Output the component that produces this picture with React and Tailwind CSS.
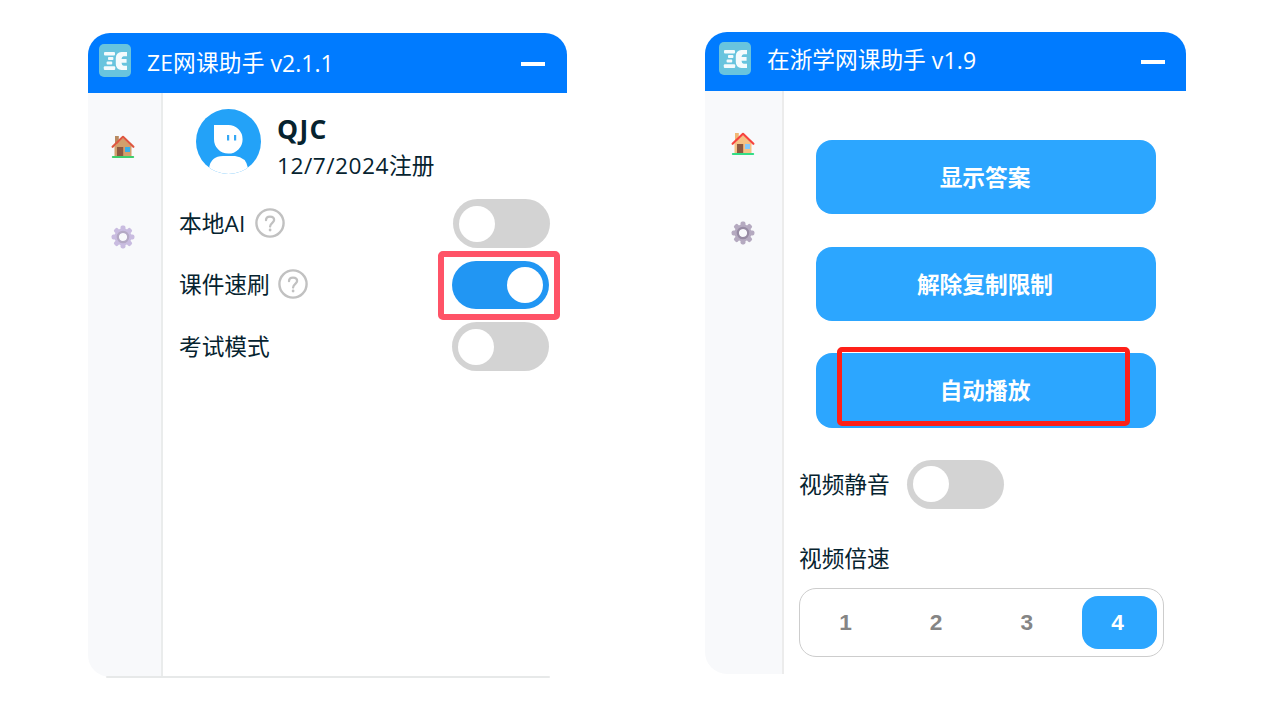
import React from "react";

const latin = "font-['Open_Sans','Noto_Sans_CJK_SC',sans-serif]";

function Logo() {
  return (
    <svg className="h-[33px] w-8 shrink-0" viewBox="0 0 32 33">
      <rect width="32" height="33" rx="5" fill="#68c4de" />
      <g fill="#f4fbfd">
        <rect x="5" y="8" width="11" height="3.6" rx="1" />
        <rect x="9" y="13" width="5.4" height="3" rx="0.8" />
        <rect x="7.6" y="17.6" width="5.6" height="3" rx="0.8" />
        <rect x="4.8" y="22.2" width="11.4" height="3.8" rx="1" />
        <path d="M22.5 8H28V12.2H24.6Q22.8 12.4 22.5 15H27.6V18.8H22.5Q22.7 21.6 24.7 21.8H28V26H22.5Q16.8 25.5 16.8 20V14Q17 8.5 22.5 8Z" />
      </g>
    </svg>
  );
}

function House({ muted }) {
  return (
    <svg className="h-6 w-6" viewBox="0 0 24 24">
      <rect x="4" y="1" width="3.8" height="8" fill={muted ? "#b88b61" : "#f1b875"} />
      <path d="M3.5 11 12 3 20.5 11V22H3.5Z" fill={muted ? "#d2a06c" : "#f5c184"} />
      <path d="M1.6 11.8 12 1.8 22.4 11.8" fill="none" stroke={muted ? "#df573f" : "#f7443e"} strokeWidth="2.2" strokeLinecap="round" strokeLinejoin="round" />
      <rect x="6" y="12" width="6.2" height="9" fill="#8d5840" />
      <rect x="14" y="12" width="5" height="5" fill={muted ? "#38aee8" : "#84c9fb"} />
      <rect x="0.8" y="21" width="22.4" height="2" rx="1" fill={muted ? "#3ece6c" : "#32dd86"} />
    </svg>
  );
}

const teeth = [0, 45, 90, 135, 180, 225, 270, 315];

function Gear({ muted }) {
  const outer = muted ? "#c9bce0" : "#b5aac0";
  return (
    <svg className="h-6 w-6" viewBox="0 0 24 24">
      {teeth.map((a) => (
        <rect key={a} x="9.5" y="0.6" width="5" height="6" rx="1.8" fill={outer} transform={`rotate(${a} 12 12)`} />
      ))}
      <circle cx="12" cy="12" r="6.3" fill="none" stroke={outer} strokeWidth="4.4" />
      <circle cx="12" cy="12" r="5.2" fill="none" stroke={muted ? "#b4a9c4" : "#978ba3"} strokeWidth="2.2" />
    </svg>
  );
}

function Help() {
  return (
    <svg className="h-[30px] w-[30px] shrink-0" viewBox="0 0 30 30" fill="none" stroke="#c1c1c1">
      <circle cx="15" cy="15" r="13.6" strokeWidth="2.4" />
      <path d="M11 12.2C11 9.8 12.7 8.6 15 8.6S19.1 9.9 19.1 12.1C19.1 14.7 15.1 15 15.1 18.5" strokeWidth="2.3" strokeLinecap="round" />
      <circle cx="15.1" cy="22" r="1.4" fill="#c1c1c1" stroke="none" />
    </svg>
  );
}

function Toggle({ on, className = "" }) {
  return (
    <div className={`flex h-[48.5px] w-[97px] shrink-0 items-center rounded-full px-1.5 ${on ? "justify-end bg-[#2196f3]" : "bg-[#d3d3d3]"} ${className}`}>
      <div className="h-9 w-9 rounded-full bg-white" />
    </div>
  );
}

function Avatar() {
  return (
    <svg className="h-[65px] w-[65px] shrink-0" viewBox="0 0 65 65">
      <defs>
        <clipPath id="face"><circle cx="32.5" cy="32.5" r="32.5" /></clipPath>
      </defs>
      <g clipPath="url(#face)">
        <rect width="65" height="65" fill="#23a2f8" />
        <path d="M18 16H32A14.3 14.3 0 1 1 18 30Z" fill="#fff" />
        <path d="M31 26h2.2v5.5H31zM38 26h2.2v5.5H38z" fill="#35a8f5" />
        <path d="M13 65V59Q15 47 27 47H39Q50 48 52 59V65Z" fill="#fff" />
      </g>
    </svg>
  );
}

function PanelOne() {
  return (
    <section className="mt-[33px] flex h-[645px] w-[479px] flex-col">
      <header className="flex h-[60px] items-start rounded-t-[22px] bg-[#007bff] pl-[11px] pt-[11px] text-white">
        <Logo />
        <h1 className="ml-4 flex h-[37px] items-center whitespace-nowrap text-[22.7px]">
          <span className="tracking-[0.2px]">ZE网课助手</span>
          <span className="ml-[6px] text-[23px]">v2.1.1</span>
        </h1>
        <div className="ml-auto mr-[22px] mt-[18px] h-1 w-6 bg-white" />
      </header>
      <div className="flex h-[584px]">
        <nav className="flex w-[75px] shrink-0 flex-col items-center rounded-bl-[22px] border-r-2 border-[#eaecec] bg-[#f8f9fb] pt-[42px] pr-[3px]">
          <House muted />
          <div className="mt-[66px]"><Gear muted /></div>
        </nav>
        <main className="flex grow flex-col pl-4 pt-4">
          <div className="ml-[17px] flex h-[74px]">
            <Avatar />
            <div className="ml-4 flex flex-col whitespace-nowrap">
              <strong className="mt-[2px] h-9 text-[26.5px] leading-9 tracking-[1.3px]">QJC</strong>
              <div className="h-9 text-[22.7px] leading-[37px]"><span className="tracking-[0.5px]">12/7/2024</span><span>注册</span></div>
            </div>
          </div>
          <div className="mt-4 flex h-[49px] w-[371px] items-center whitespace-nowrap text-[22.7px]">
            <span>本地<span className="tracking-[0.4px]">AI</span></span><span className="-mt-[2px] ml-[9px] shrink-0"><Help /></span><Toggle className="ml-auto" />
          </div>
          <div className="mt-3 flex h-[50px] w-[370px] items-center text-[22.7px]">
            <span>课件速刷</span><span className="-mt-[2px] ml-2"><Help /></span>
            <div className="relative ml-auto">
              <Toggle on />
              <div className="absolute -left-3.5 -top-2.5 h-[69.5px] w-[121.5px] rounded-[5px] border-[6px] border-[#ff5367]" />
            </div>
          </div>
          <div className="mt-3 flex h-[49px] w-[370px] items-center text-[22.7px]">
            <span>考试模式</span><Toggle className="ml-auto" />
          </div>
        </main>
      </div>
      <div className="-mt-px ml-[18px] h-[2px] w-[444px] shrink-0 rounded-full bg-[#e7e9e9]" />
    </section>
  );
}

function ActionButton({ children }) {
  return (
    <button className="flex h-[74.5px] w-[340px] items-center justify-center rounded-2xl bg-[#2ca6ff] pr-[2px] pt-[1.5px] text-[22.7px] font-bold text-white">
      {children}
    </button>
  );
}

function PanelTwo() {
  return (
    <section className="mt-8 flex h-[642px] w-[481px] flex-col">
      <header className="flex h-[59px] items-start rounded-t-[22px] bg-[#007bff] pl-3.5 pt-2.5 text-white">
        <Logo />
        <h1 className="ml-4 flex h-9 items-center whitespace-nowrap text-[22.7px]">
          <span>在浙学网课助手</span><span className="ml-[6px] text-[23px] tracking-[0.2px]">v1.9</span>
        </h1>
        <div className="ml-auto mr-[21px] mt-[18px] h-1 w-6 bg-white" />
      </header>
      <div className="flex h-[583px]">
        <nav className="flex w-[79px] shrink-0 flex-col items-center rounded-bl-[22px] border-r-2 border-[#ececec] bg-[#f8f9fb] pt-[41px] pr-px">
          <House />
          <div className="mt-[65px]"><Gear /></div>
        </nav>
        <main className="flex grow flex-col pl-[15px] pt-[48.9px]">
          <div className="ml-[17px] flex flex-col gap-[32.3px]">
            <ActionButton>显示答案</ActionButton>
            <ActionButton>解除复制限制</ActionButton>
            <div className="relative w-[340px]">
              <ActionButton>自动播放</ActionButton>
              <div className="absolute left-[21px] -top-[6px] h-[79px] w-[293px] rounded-[5px] border-[5px] border-[#ff2018]" />
            </div>
          </div>
          <div className="mt-8 flex h-[49px] items-center text-[22.7px]">
            <span className="pt-[2px]">视频静音</span><Toggle className="ml-[17px]" />
          </div>
          <div className="mt-[34px] h-[30px] text-[22.7px] leading-[32px]">视频倍速</div>
          <div className="mt-[15px] flex h-[69px] w-[365px] items-center justify-end gap-[15.7px] rounded-[17px] border border-[#cdcdcd] pr-1.5 font-['Liberation_Sans',sans-serif] text-[22.7px] font-bold text-[#858585]">
            {[1, 2, 3].map((n) => (
              <span key={n} className="flex h-[53px] w-[75px] items-center justify-center pr-[4px]">{n}</span>
            ))}
            <span className="flex h-[53px] w-[75px] items-center justify-center rounded-2xl bg-[#2ca6ff] pr-[4px] text-white">4</span>
          </div>
        </main>
      </div>
    </section>
  );
}

export default function App() {
  return (
    <div className={`flex h-[720px] w-[1280px] items-start gap-[138px] overflow-hidden bg-white pl-[88px] leading-9 text-[#06232f] ${latin}`}>
      <PanelOne />
      <PanelTwo />
    </div>
  );
}
